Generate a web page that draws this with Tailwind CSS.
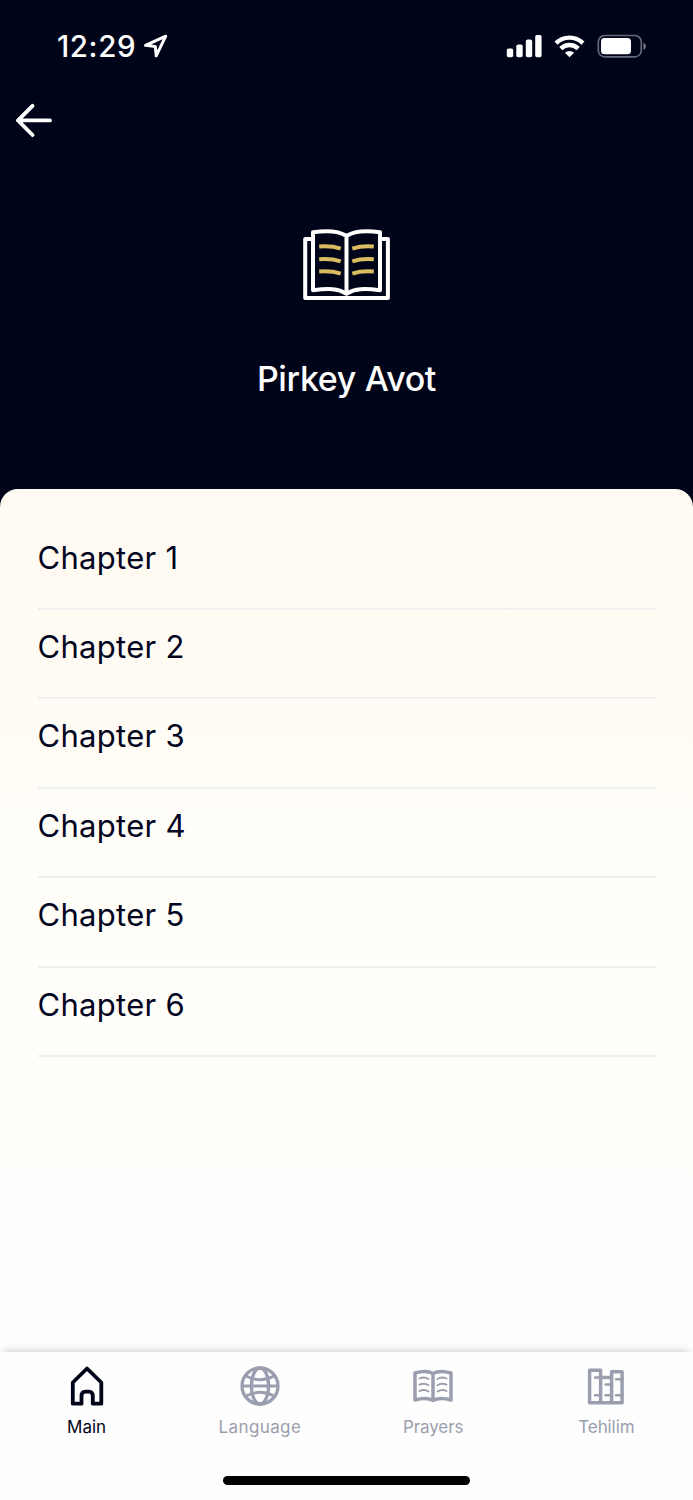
<!DOCTYPE html>
<html lang="en">
<head>
  <meta charset="UTF-8" />
  <meta name="viewport" content="width=device-width, initial-scale=1.0" />
  <title>Pirkey Avot</title>
  <script src="https://cdn.jsdelivr.net/npm/@tailwindcss/browser@4"></script>
  <style>
    body {
      font-family: Inter, 'Liberation Sans', sans-serif;
    }
  </style>
</head>
<body class="bg-[#000418] h-[1500px] overflow-hidden flex flex-col">

  <!-- Header -->
  <header class="h-[489px] shrink-0 text-white">
    <div class="h-[92px] flex items-center justify-between pl-[57px] pr-[47px]">
      <div class="flex items-center gap-[8px]">
        <span class="w-[78px] pt-[2px] text-[29.5px] leading-none font-medium tracking-[0.6px] whitespace-nowrap">12:29</span>
        <svg class="w-[25px] h-[24px]" viewBox="143 34.500 25 24" fill="none" stroke="#fff" stroke-width="3" stroke-linejoin="round">
          <path d="M145.500 45.800 165.700 36.700 156.200 56.300 155.300 46.900Z" />
        </svg>
      </div>
      <svg class="w-[140px] h-[24px]" viewBox="506 34 140 24" fill="#fff">
        <rect x="506.800" y="48.600" width="6.400" height="8.600" rx="1.800" />
        <rect x="516.300" y="44.500" width="6.400" height="12.700" rx="1.800" />
        <rect x="525.800" y="39.600" width="6.400" height="17.600" rx="1.800" />
        <rect x="535.200" y="35" width="6.400" height="22.200" rx="1.800" />
        <g fill="none" stroke="#fff" stroke-width="4.400">
          <path d="M556 43.100a19.500 19.500 0 0 1 27 0" />
          <path d="M560.800 48.600a12.300 12.300 0 0 1 17.400 0" />
        </g>
        <path d="M564.900 52.800a6.700 6.700 0 0 1 9.200 0L569.500 57.300Z" />
        <rect x="598.300" y="35.500" width="43" height="21.400" rx="6.500" fill="none" stroke="#666978" stroke-width="1.700" />
        <rect x="601" y="38" width="30" height="16.300" rx="3.600" />
        <path d="M643.500 42.700c3.200 1.200 3.200 6 0 7.200Z" fill="#727582" />
      </svg>
    </div>
    <div class="h-[57px] pl-[15px] pb-[2px] flex items-center">
      <svg class="w-[38px] h-[34px]" viewBox="15 103 38 34" fill="none" stroke="#fff" stroke-width="3.800" stroke-linecap="round" stroke-linejoin="round">
        <path d="M50 120.400H18M32.500 105.800 18 120.400 32.500 135" />
      </svg>
    </div>
    <div class="flex flex-col items-center pt-[79px]">
      <svg class="w-[89px] h-[73px]" viewBox="302 228 89 73" fill="none" stroke="#fff" stroke-width="4" stroke-linejoin="round">
        <path d="M313 238.900H305.200V297.900H387.900V238.900H380" />
        <path d="M346.500 236C340 231.500 329 230 313 232.200V290.200C329 288.200 338 288.500 346.500 293.700C355 288.500 364 288.200 380 290.200V232.200C364 230 353 231.500 346.500 236V293" />
        <g stroke="#d9bc62" stroke-width="4">
          <path d="M319.200 246.500Q331.500 245.500 340.700 248.600" />
          <path d="M319.200 259.200Q331.500 258.200 340.700 261.300" />
          <path d="M319.200 271.600Q331.500 270.600 340.700 273.700" />
          <path d="M373.800 246.500Q361.500 245.500 352.300 248.600" />
          <path d="M373.800 259.200Q361.500 258.200 352.300 261.300" />
          <path d="M373.800 271.600Q361.500 270.600 352.300 273.700" />
        </g>
      </svg>
      <h1 class="mt-[57px] text-[34px] leading-[42px] font-medium tracking-[-0.35px]">Pirkey Avot</h1>
    </div>
  </header>

  <!-- Chapters -->
  <main class="h-[863px] shrink-0 rounded-t-[18px] bg-linear-to-b from-[#fffaf1] via-[#fffef9] to-[#fefefe] px-[37.500px] pt-[31.500px] text-[31px] tracking-[0.3px] text-[#000420]">
    <ul>
      <li class="h-[89.450px] leading-[73px] border-b-2 border-[#efefed]">Chapter 1</li>
      <li class="h-[89.450px] leading-[73px] border-b-2 border-[#efefed]">Chapter 2</li>
      <li class="h-[89.450px] leading-[73px] border-b-2 border-[#efefed]">Chapter 3</li>
      <li class="h-[89.450px] leading-[73px] border-b-2 border-[#efefed]">Chapter 4</li>
      <li class="h-[89.450px] leading-[73px] border-b-2 border-[#efefed]">Chapter 5</li>
      <li class="h-[89.450px] leading-[73px] border-b-2 border-[#efefed]">Chapter 6</li>
    </ul>
  </main>

  <!-- Tab bar -->
  <nav class="h-[148px] shrink-0 bg-[#fefefe] shadow-[0_-5px_8px_-4px_rgba(0,0,0,0.2)] flex flex-col items-center">
    <div class="w-full grid grid-cols-4 pt-[12px] text-[17px] leading-[24px] text-[#9a9eae]">
      <a class="flex flex-col items-center gap-[7px] text-[#000418]">
        <svg class="w-[44px] h-[44px]" viewBox="64.600 1364 44 44" fill="none" stroke="currentColor" stroke-width="3.800" stroke-linejoin="round">
          <path d="M72.400 1382.500 86.600 1368.500 100.900 1382.500V1403.700H92.400V1396.500Q92.400 1391.700 88.500 1391.700H85Q81.100 1391.700 81.100 1396.500V1403.700H72.400Z" />
        </svg>
        <span>Main</span>
      </a>
      <a class="flex flex-col items-center gap-[7px]">
        <svg class="w-[44px] h-[44px]" viewBox="238 1364 44 44" fill="none" stroke="currentColor" stroke-width="3.300">
          <circle cx="260" cy="1386" r="18" />
          <ellipse cx="260" cy="1386" rx="8.600" ry="18" />
          <path d="M242 1386H278M246 1376Q260 1383.500 274 1376M246 1396Q260 1388.500 274 1396" stroke-width="2.800" />
        </svg>
        <span class="tracking-[0.4px]">Language</span>
      </a>
      <a class="flex flex-col items-center gap-[7px]">
        <svg class="w-[44px] h-[44px]" viewBox="411 1364 44 44" fill="none" stroke="currentColor" stroke-width="3.500" stroke-linejoin="round">
          <path d="M433 1373.500C428 1370.500 422 1371 415 1373V1400C422 1398 428 1397.800 433 1400.500C438 1397.800 444 1398 451 1400V1373C444 1371 438 1370.500 433 1373.500V1400" />
          <g stroke-width="1.900" stroke-linecap="round">
            <path d="M419.500 1378.500Q424.500 1376.300 428.500 1379M419.500 1384.700Q424.500 1382.500 428.500 1385.200M419.500 1391Q424.500 1388.800 428.500 1391.500" />
            <path d="M446.500 1378.500Q441.500 1376.300 437.500 1379M446.500 1384.700Q441.500 1382.500 437.500 1385.200M446.500 1391Q441.500 1388.800 437.500 1391.500" />
          </g>
        </svg>
        <span class="tracking-[-0.1px]">Prayers</span>
      </a>
      <a class="flex flex-col items-center gap-[7px]">
        <svg class="w-[44px] h-[44px]" viewBox="584.400 1364 44 44" fill="none" stroke="currentColor" stroke-width="3.500" stroke-linejoin="round">
          <path d="M590 1370.300H601V1402.700H590ZM601 1377.500H612V1402.700H601ZM612 1371.800H622.500V1402.700H612Z" />
          <path d="M601 1377.500H595.500M601 1395.300H595.500M612 1384.500H606M612 1395.300H606M622.500 1379.300H616.500M622.500 1395.300H616.500" stroke-width="2.600" stroke-linecap="round" />
        </svg>
        <span class="tracking-[-0.1px]">Tehilim</span>
      </a>
    </div>
    <div class="mt-[37px] w-[247px] h-[9px] rounded-full bg-black"></div>
  </nav>

</body>
</html>
